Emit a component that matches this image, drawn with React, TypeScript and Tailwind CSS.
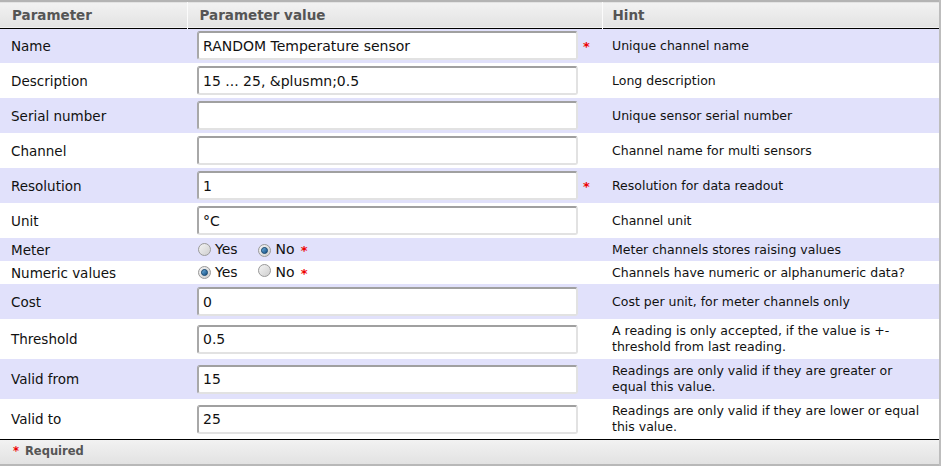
import React from "react";

type Row = {
  label: string;
  kind: "input" | "radio";
  value?: string;
  checked?: "yes" | "no";
  required?: boolean;
  hint: string;
  tall?: boolean;
};

const rows: Row[] = [
  { label: "Name", kind: "input", value: "RANDOM Temperature sensor", required: true, hint: "Unique channel name" },
  { label: "Description", kind: "input", value: "15 ... 25, &plusmn;0.5", hint: "Long description" },
  { label: "Serial number", kind: "input", value: "", hint: "Unique sensor serial number" },
  { label: "Channel", kind: "input", value: "", hint: "Channel name for multi sensors" },
  { label: "Resolution", kind: "input", value: "1", required: true, hint: "Resolution for data readout" },
  { label: "Unit", kind: "input", value: "°C", hint: "Channel unit" },
  { label: "Meter", kind: "radio", checked: "no", required: true, hint: "Meter channels stores raising values" },
  { label: "Numeric values", kind: "radio", checked: "yes", required: true, hint: "Channels have numeric or alphanumeric data?" },
  { label: "Cost", kind: "input", value: "0", hint: "Cost per unit, for meter channels only" },
  { label: "Threshold", kind: "input", value: "0.5", hint: "A reading is only accepted, if the value is +- threshold from last reading.", tall: true },
  { label: "Valid from", kind: "input", value: "15", hint: "Readings are only valid if they are greater or equal this value.", tall: true },
  { label: "Valid to", kind: "input", value: "25", hint: "Readings are only valid if they are lower or equal this value.", tall: true },
];

const Star = () => <span className="text-[#e00] font-bold text-[13px]">*</span>;

const Radio = ({ on }: { on: boolean }) => (
  <span className="inline-flex w-[13px] h-[13px] rounded-full border border-[#9a9a9a] bg-gradient-to-br from-[#f4f4f4] to-[#cfcfcf] items-center justify-center">
    {on && <span className="w-[7px] h-[7px] rounded-full bg-gradient-to-br from-[#6fb0dd] to-[#0d4f86] border border-[#1d4a70]" />}
  </span>
);

export default function App() {
  return (
    <div className="w-[943px] h-[467px] bg-white text-[12.5px] text-[#111] font-['DejaVu_Sans','Verdana',sans-serif]">
      <div className="w-[941px] border-r-2 border-[#bdbdbd]">
        <table className="w-full border-collapse table-fixed">
          <colgroup>
            <col className="w-[187px]" />
            <col className="w-[415px]" />
            <col />
          </colgroup>
          <thead>
            <tr className="h-[27px] bg-gradient-to-b from-[#f2f2f2] to-[#e3e3e3] border-t-2 border-[#b4b4b4] border-b border-b-black text-left text-[#555] text-[13.5px] font-bold">
              <th className="pl-3 font-bold">Parameter</th>
              <th className="pl-3 font-bold border-l border-[#fbfbfb]">Parameter value</th>
              <th className="pl-[10px] font-bold border-l border-[#fbfbfb]">Hint</th>
            </tr>
          </thead>
          <tbody>
            {rows.map((r, i) => (
              <tr
                key={r.label}
                className={`${i % 2 === 0 ? "bg-[#e1e1fb]" : "bg-white"} ${r.kind === "radio" ? "h-[23px]" : r.tall ? "h-[40px]" : "h-[35px]"}`}
              >
                <td className="pl-[11px] text-[13.5px] leading-[18px]">{r.label}</td>
                <td className="pl-[10px]">
                  {r.kind === "input" ? (
                    <div className="flex items-center">
                      <input
                        readOnly
                        value={r.value}
                        className="w-[381px] h-[29px] px-[4px] rounded-[3px] bg-white border-2 border-t-[#a0a0a0] border-l-[#a8a8a8] border-r-[#e2e2e2] border-b-[#e2e2e2] outline-none text-[14px] text-[#111]"
                      />
                      {r.required && <span className="ml-[5px] mt-[2px]"><Star /></span>}
                    </div>
                  ) : (
                    <div className="flex items-center pl-[1px] text-[14px]">
                      <Radio on={r.checked === "yes"} />
                      <span className="ml-[4px]">Yes</span>
                      <span className="ml-[20px]"><Radio on={r.checked === "no"} /></span>
                      <span className="ml-[5px]">No</span>
                      {r.required && <span className="ml-[6px] mt-[2px]"><Star /></span>}
                    </div>
                  )}
                </td>
                <td className="pl-[10px] pr-3 leading-[16px]">{r.hint}</td>
              </tr>
            ))}
          </tbody>
        </table>
        <div className="h-[27px] border-t border-black bg-gradient-to-b from-[#f2f2f2] to-[#e2e2e2] border-b-2 border-b-[#b8b8b8] flex items-center pl-[13px] text-[11.5px] font-bold text-[#555]">
          <span className="text-[#e00] mr-[6px]">*</span>
          Required
        </div>
      </div>
    </div>
  );
}
